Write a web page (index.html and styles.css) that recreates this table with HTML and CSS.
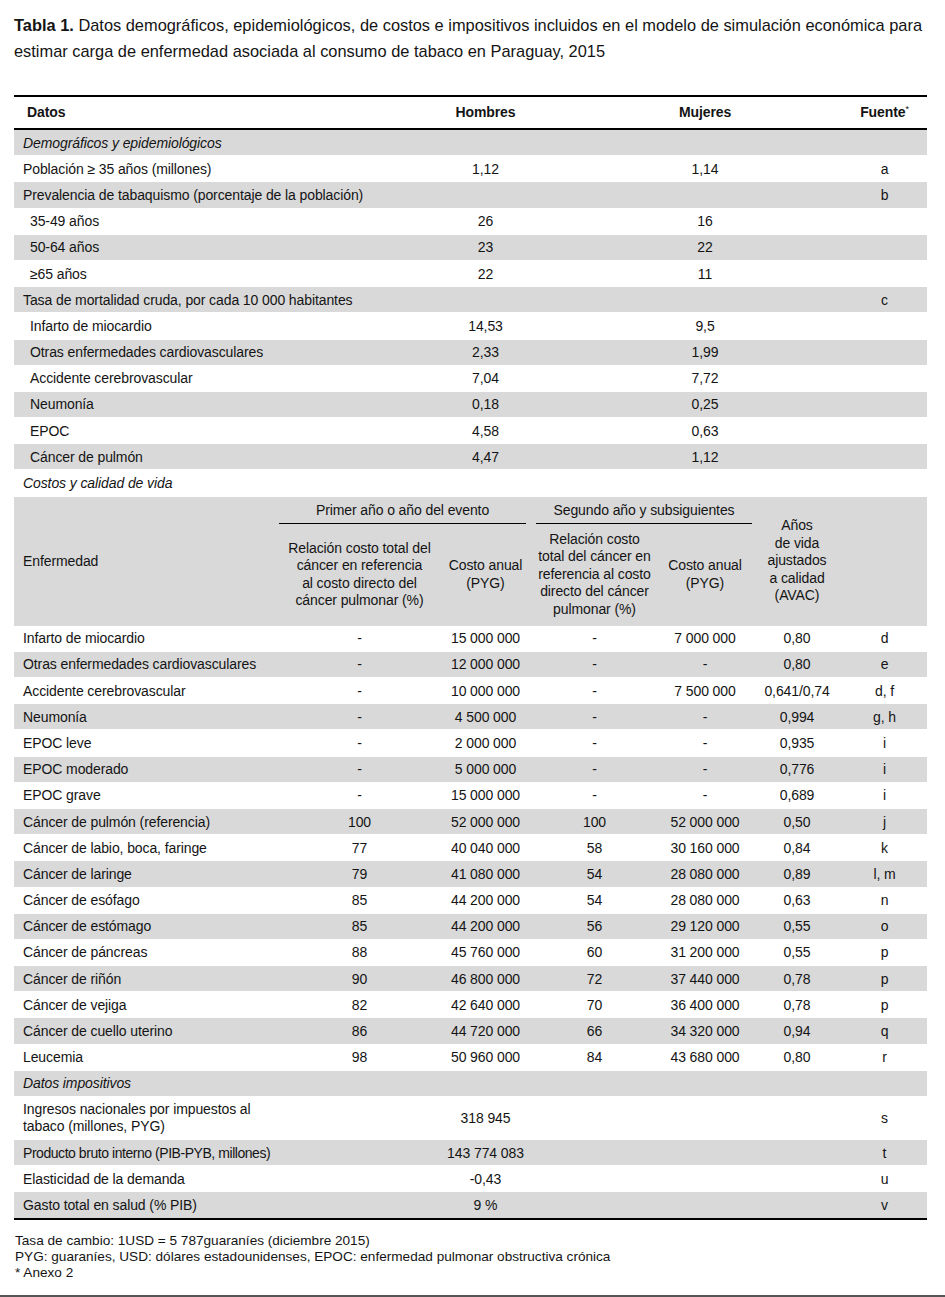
FILE: index.html
```html
<!DOCTYPE html>
<html lang="es">
<head>
<meta charset="utf-8">
<title>Tabla 1</title>
<link rel="stylesheet" href="styles.css">
</head>
<body>
<div class="page">
  <p class="title"><b>Tabla 1.</b>&nbsp;Datos demográficos, epidemiológicos, de costos e impositivos incluidos en el modelo de simulación económica para estimar carga de enfermedad asociada al consumo de tabaco en Paraguay, 2015</p>

  <table class="data">
    <colgroup>
      <col class="c-label"><col class="c-rel1"><col class="c-cost1"><col class="c-rel2"><col class="c-cost2"><col class="c-avac"><col class="c-src">
    </colgroup>
    <thead>
      <tr class="head">
        <th colspan="2" class="l hl">Datos</th>
        <th>Hombres</th>
        <th></th>
        <th>Mujeres</th>
        <th></th>
        <th>Fuente<span class="ast">*</span></th>
      </tr>
    </thead>
    <tbody>
      <tr class="g"><td colspan="7" class="l sec">Demográficos y epidemiológicos</td></tr>
      <tr><td colspan="2" class="l">Población ≥ 35 años (millones)</td><td>1,12</td><td></td><td>1,14</td><td></td><td>a</td></tr>
      <tr class="g"><td colspan="2" class="l">Prevalencia de tabaquismo (porcentaje de la población)</td><td></td><td></td><td></td><td></td><td>b</td></tr>
      <tr><td colspan="2" class="l ind">35-49 años</td><td>26</td><td></td><td>16</td><td></td><td></td></tr>
      <tr class="g"><td colspan="2" class="l ind">50-64 años</td><td>23</td><td></td><td>22</td><td></td><td></td></tr>
      <tr><td colspan="2" class="l ind">≥65 años</td><td>22</td><td></td><td>11</td><td></td><td></td></tr>
      <tr class="g"><td colspan="2" class="l">Tasa de mortalidad cruda, por cada 10 000 habitantes</td><td></td><td></td><td></td><td></td><td>c</td></tr>
      <tr><td colspan="2" class="l ind">Infarto de miocardio</td><td>14,53</td><td></td><td>9,5</td><td></td><td></td></tr>
      <tr class="g"><td colspan="2" class="l ind">Otras enfermedades cardiovasculares</td><td>2,33</td><td></td><td>1,99</td><td></td><td></td></tr>
      <tr><td colspan="2" class="l ind">Accidente cerebrovascular</td><td>7,04</td><td></td><td>7,72</td><td></td><td></td></tr>
      <tr class="g"><td colspan="2" class="l ind">Neumonía</td><td>0,18</td><td></td><td>0,25</td><td></td><td></td></tr>
      <tr><td colspan="2" class="l ind">EPOC</td><td>4,58</td><td></td><td>0,63</td><td></td><td></td></tr>
      <tr class="g"><td colspan="2" class="l ind">Cáncer de pulmón</td><td>4,47</td><td></td><td>1,12</td><td></td><td></td></tr>
      <tr><td colspan="7" class="l sec">Costos y calidad de vida</td></tr>

      <tr class="g sub1">
        <td rowspan="2" class="l">Enfermedad</td>
        <td colspan="2" class="grp"><span class="grp-line first">Primer año o año del evento</span></td>
        <td colspan="2" class="grp"><span class="grp-line second">Segundo año y subsiguientes</span></td>
        <td rowspan="2" class="multi">Años<br>de vida<br>ajustados<br>a calidad<br>(AVAC)</td>
        <td rowspan="2"></td>
      </tr>
      <tr class="g sub2">
        <td class="multi">Relación costo total del<br>cáncer en referencia<br>al costo directo del<br>cáncer pulmonar (%)</td>
        <td class="multi">Costo anual<br>(PYG)</td>
        <td class="multi">Relación costo<br>total del cáncer en<br>referencia al costo<br>directo del cáncer<br>pulmonar (%)</td>
        <td class="multi">Costo anual<br>(PYG)</td>
      </tr>

      <tr><td class="l">Infarto de miocardio</td><td>-</td><td>15 000 000</td><td>-</td><td>7 000 000</td><td>0,80</td><td>d</td></tr>
      <tr class="g"><td class="l">Otras enfermedades cardiovasculares</td><td>-</td><td>12 000 000</td><td>-</td><td>-</td><td>0,80</td><td>e</td></tr>
      <tr><td class="l">Accidente cerebrovascular</td><td>-</td><td>10 000 000</td><td>-</td><td>7 500 000</td><td>0,641/0,74</td><td>d, f</td></tr>
      <tr class="g"><td class="l">Neumonía</td><td>-</td><td>4 500 000</td><td>-</td><td>-</td><td>0,994</td><td>g, h</td></tr>
      <tr><td class="l">EPOC leve</td><td>-</td><td>2 000 000</td><td>-</td><td>-</td><td>0,935</td><td>i</td></tr>
      <tr class="g"><td class="l">EPOC moderado</td><td>-</td><td>5 000 000</td><td>-</td><td>-</td><td>0,776</td><td>i</td></tr>
      <tr><td class="l">EPOC grave</td><td>-</td><td>15 000 000</td><td>-</td><td>-</td><td>0,689</td><td>i</td></tr>
      <tr class="g"><td class="l">Cáncer de pulmón (referencia)</td><td>100</td><td>52 000 000</td><td>100</td><td>52 000 000</td><td>0,50</td><td>j</td></tr>
      <tr><td class="l">Cáncer de labio, boca, faringe</td><td>77</td><td>40 040 000</td><td>58</td><td>30 160 000</td><td>0,84</td><td>k</td></tr>
      <tr class="g"><td class="l">Cáncer de laringe</td><td>79</td><td>41 080 000</td><td>54</td><td>28 080 000</td><td>0,89</td><td>l, m</td></tr>
      <tr><td class="l">Cáncer de esófago</td><td>85</td><td>44 200 000</td><td>54</td><td>28 080 000</td><td>0,63</td><td>n</td></tr>
      <tr class="g"><td class="l">Cáncer de estómago</td><td>85</td><td>44 200 000</td><td>56</td><td>29 120 000</td><td>0,55</td><td>o</td></tr>
      <tr><td class="l">Cáncer de páncreas</td><td>88</td><td>45 760 000</td><td>60</td><td>31 200 000</td><td>0,55</td><td>p</td></tr>
      <tr class="g"><td class="l">Cáncer de riñón</td><td>90</td><td>46 800 000</td><td>72</td><td>37 440 000</td><td>0,78</td><td>p</td></tr>
      <tr><td class="l">Cáncer de vejiga</td><td>82</td><td>42 640 000</td><td>70</td><td>36 400 000</td><td>0,78</td><td>p</td></tr>
      <tr class="g"><td class="l">Cáncer de cuello uterino</td><td>86</td><td>44 720 000</td><td>66</td><td>34 320 000</td><td>0,94</td><td>q</td></tr>
      <tr><td class="l">Leucemia</td><td>98</td><td>50 960 000</td><td>84</td><td>43 680 000</td><td>0,80</td><td>r</td></tr>

      <tr class="g"><td colspan="7" class="l sec">Datos impositivos</td></tr>
      <tr class="two"><td class="l">Ingresos nacionales por impuestos al<br>tabaco (millones, PYG)</td><td></td><td>318 945</td><td></td><td></td><td></td><td>s</td></tr>
      <tr class="g"><td class="l tight">Producto bruto interno (PIB-PYB, millones)</td><td></td><td>143 774 083</td><td></td><td></td><td></td><td>t</td></tr>
      <tr><td class="l">Elasticidad de la demanda</td><td></td><td>-0,43</td><td></td><td></td><td></td><td>u</td></tr>
      <tr class="g last"><td class="l">Gasto total en salud (% PIB)</td><td></td><td>9 %</td><td></td><td></td><td></td><td>v</td></tr>
    </tbody>
  </table>

  <div class="notes">
    <p>Tasa de cambio: 1USD = 5 787guaraníes (diciembre 2015)</p>
    <p>PYG: guaraníes, USD: dólares estadounidenses, EPOC: enfermedad pulmonar obstructiva crónica</p>
    <p>* Anexo 2</p>
  </div>
</div>
<div class="rule"></div>
</body>
</html>
```

FILE: styles.css
```css
* { box-sizing: border-box; }

body {
  margin: 0;
  font-family: "Liberation Sans", Arial, sans-serif;
  color: #141414;
  background: #fff;
}

.page {
  padding: 12px 18px 0 14px;
}

.title {
  margin: 0 -12px 0 0;
  font-size: 16.4px;
  line-height: 26px;
}

.data {
  margin-top: 31px;
  width: 913px;
  table-layout: fixed;
  border-collapse: separate;
  border-spacing: 0;
  font-size: 14px;
  letter-spacing: -0.1px;
}

.c-label { width: 265px; }
.c-rel1 { width: 161px; }
.c-cost1 { width: 91px; }
.c-rel2 { width: 127px; }
.c-cost2 { width: 94px; }
.c-avac { width: 90px; }
.c-src { width: 85px; }

.data th,
.data td {
  padding: 4.6px 2px 3.6px;
  line-height: 17px;
  text-align: center;
  vertical-align: middle;
  white-space: nowrap;
  border-bottom: 1px solid #fff;
}

.data .head th {
  font-weight: bold;
  padding: 7px 2px;
  height: 35px;
  border-top: 2px solid #000;
  border-bottom: 2px solid #000;
}

.ast {
  font-size: 9px;
  line-height: 0;
  vertical-align: 5px;
  font-weight: normal;
}

.data .head .hl { padding-left: 13px; }

.data .l {
  text-align: left;
  padding-left: 9px;
}

.data .ind { padding-left: 16px; }

.data .sec { font-style: italic; }

.data .tight { letter-spacing: -0.45px; }

.g td { background: #d9d9d9; }

.sub1 td,
.sub2 td { border-bottom: 0; }

.sub1 td.grp {
  padding: 5px 0 0;
  vertical-align: top;
}

.grp-line {
  display: block;
  padding-bottom: 4px;
  border-bottom: 1px solid #000;
}

.grp-line.first { margin-right: 5px; }
.grp-line.second { margin-left: 5px; }

.data td.multi {
  line-height: 17.5px;
  padding: 0 1px;
}

.sub2 td { height: 102px; }

.two td { padding-top: 4px; padding-bottom: 4px; }

.last td { border-bottom: 2px solid #000; }

.notes {
  margin-top: 13px;
  font-size: 13.6px;
  line-height: 16px;
  padding-left: 1px;
}

.notes p { margin: 0; }

.rule {
  margin-top: 14px;
  height: 2px;
  background: #555;
}
```
